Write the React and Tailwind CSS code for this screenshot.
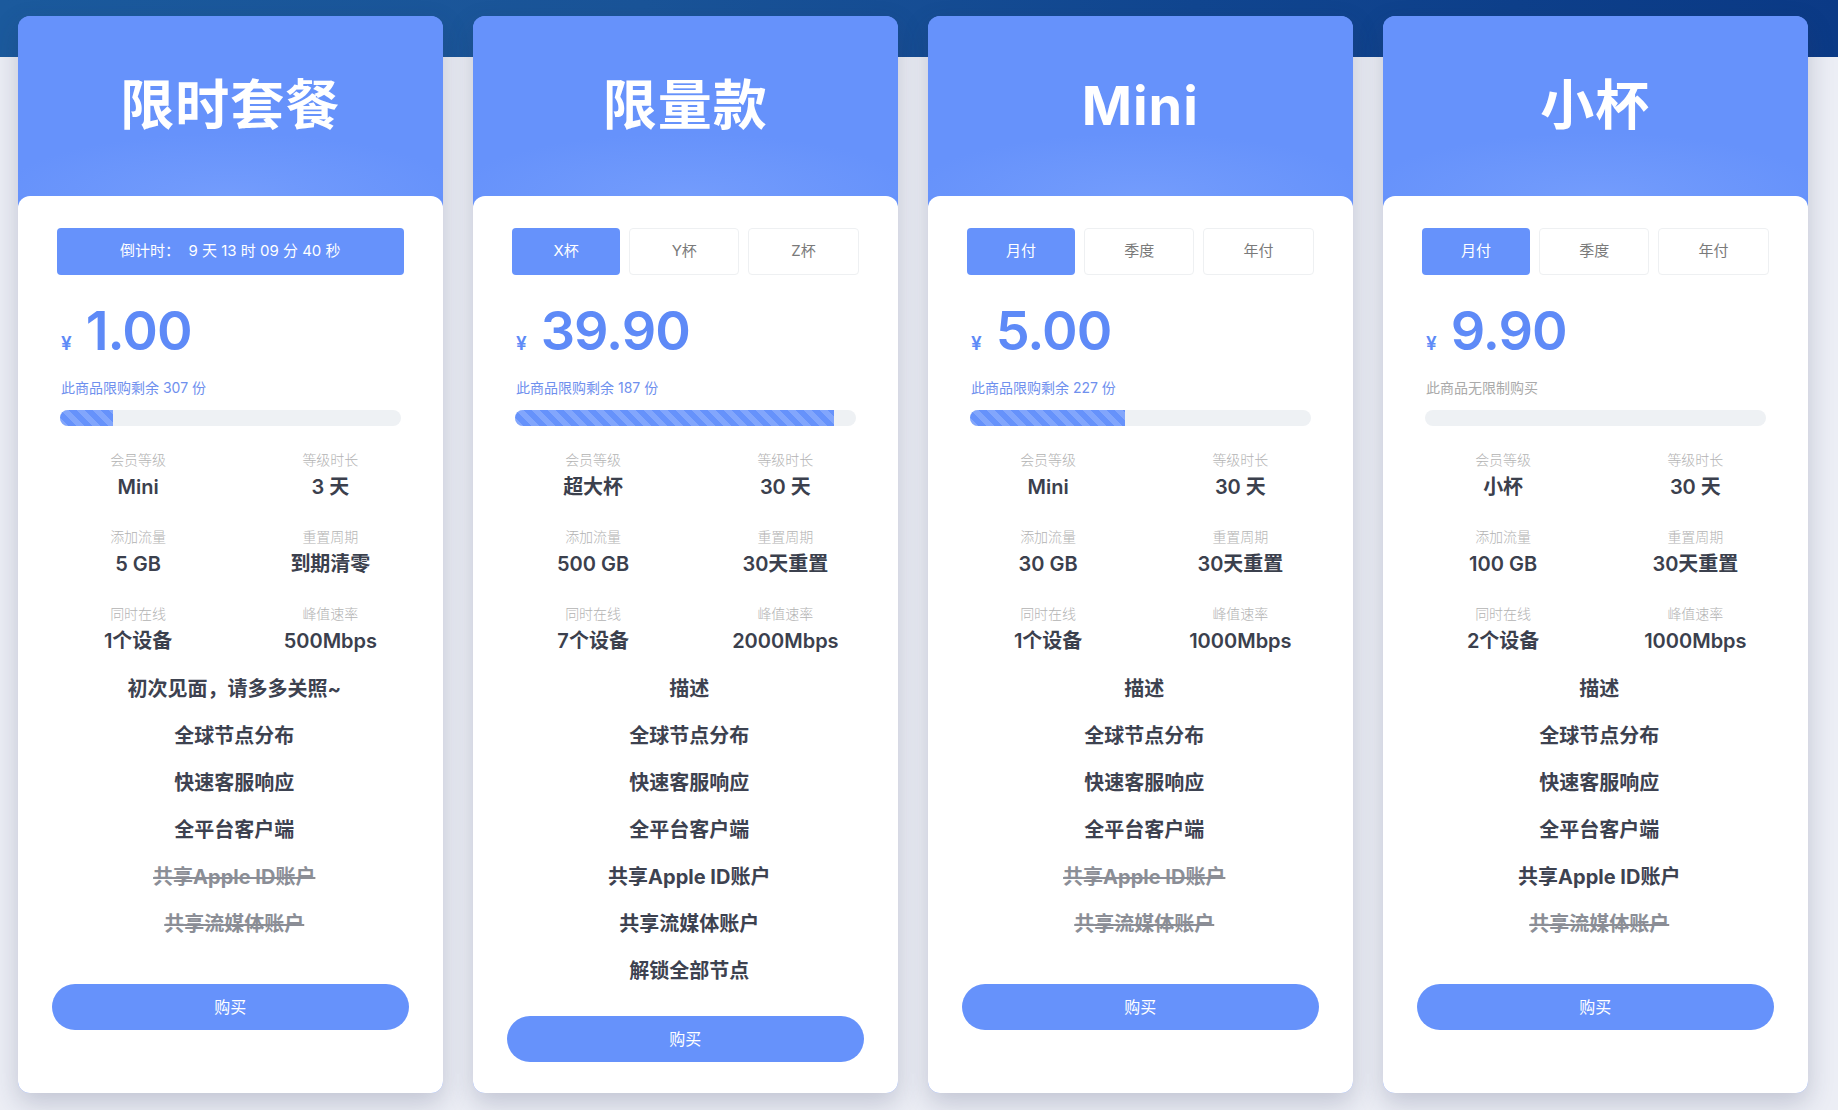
const plans = [
  {
    title: "限时套餐",
    tabs: null,
    countdown: "倒计时：  9 天 13 时 09 分 40 秒",
    price: "1.00",
    stock: "此商品限购剩余 307 份",
    limited: true,
    progress: 15.6,
    stats: [
      ["会员等级", "Mini"],
      ["等级时长", "3 天"],
      ["添加流量", "5 GB"],
      ["重置周期", "到期清零"],
      ["同时在线", "1个设备"],
      ["峰值速率", "500Mbps"],
    ],
    features: [
      ["初次见面，请多多关照~", true],
      ["全球节点分布", true],
      ["快速客服响应", true],
      ["全平台客户端", true],
      ["共享Apple ID账户", false],
      ["共享流媒体账户", false],
    ],
  },
  {
    title: "限量款",
    tabs: ["X杯", "Y杯", "Z杯"],
    price: "39.90",
    stock: "此商品限购剩余 187 份",
    limited: true,
    progress: 93.7,
    stats: [
      ["会员等级", "超大杯"],
      ["等级时长", "30 天"],
      ["添加流量", "500 GB"],
      ["重置周期", "30天重置"],
      ["同时在线", "7个设备"],
      ["峰值速率", "2000Mbps"],
    ],
    features: [
      ["描述", true],
      ["全球节点分布", true],
      ["快速客服响应", true],
      ["全平台客户端", true],
      ["共享Apple ID账户", true],
      ["共享流媒体账户", true],
      ["解锁全部节点", true],
    ],
  },
  {
    title: "Mini",
    tabs: ["月付", "季度", "年付"],
    price: "5.00",
    stock: "此商品限购剩余 227 份",
    limited: true,
    progress: 45.6,
    stats: [
      ["会员等级", "Mini"],
      ["等级时长", "30 天"],
      ["添加流量", "30 GB"],
      ["重置周期", "30天重置"],
      ["同时在线", "1个设备"],
      ["峰值速率", "1000Mbps"],
    ],
    features: [
      ["描述", true],
      ["全球节点分布", true],
      ["快速客服响应", true],
      ["全平台客户端", true],
      ["共享Apple ID账户", false],
      ["共享流媒体账户", false],
    ],
  },
  {
    title: "小杯",
    tabs: ["月付", "季度", "年付"],
    price: "9.90",
    stock: "此商品无限制购买",
    limited: false,
    progress: 0,
    stats: [
      ["会员等级", "小杯"],
      ["等级时长", "30 天"],
      ["添加流量", "100 GB"],
      ["重置周期", "30天重置"],
      ["同时在线", "2个设备"],
      ["峰值速率", "1000Mbps"],
    ],
    features: [
      ["描述", true],
      ["全球节点分布", true],
      ["快速客服响应", true],
      ["全平台客户端", true],
      ["共享Apple ID账户", true],
      ["共享流媒体账户", false],
    ],
  },
];

const PlanCard = ({ plan }) => {
  return (
    <div className="flex h-[1077px] w-[424.5px] shrink-0 flex-col overflow-hidden rounded-xl bg-[#6692fb] shadow-[0_10px_26px_rgba(40,50,90,0.22)]">
      {/* header */}
      <div className="flex h-[180px] shrink-0 items-center justify-center bg-[radial-gradient(ellipse_55%_35%_at_50%_100%,#739cfc_0%,#6692fb_100%)]">
        <h2 className="text-[54px] font-bold leading-none tracking-[1px] text-white">
          {plan.title}
        </h2>
      </div>

      {/* body */}
      <div className="flex flex-1 flex-col rounded-t-xl bg-white px-[39px] pt-8">
        {plan.tabs ? (
          <div className="flex gap-[9px]">
            {plan.tabs.map((t, i) => (
              <button
                key={t}
                className={
                  i === 0
                    ? "h-[47px] flex-1 rounded-[4px] bg-[#6692fb] text-[15px] text-white"
                    : "h-[47px] flex-1 rounded-[4px] border border-[#eef0f2] bg-white text-[15px] text-[#7a7a7a]"
                }
              >
                {t}
              </button>
            ))}
          </div>
        ) : (
          <div className="flex h-[47px] items-center justify-center rounded-[4px] bg-[#6692fb] text-[15px] whitespace-pre text-white">
            {plan.countdown}
          </div>
        )}

        <div className="px-[3px]">
          <div className="mt-[29px] flex items-baseline gap-[14px] pl-[1px] text-[#5e8af7]">
            <span className="text-[19px] font-semibold">¥</span>
            <span className="text-[54px] leading-[54px] font-semibold tracking-[-1px]">
              {plan.price}
            </span>
          </div>
          <p
            className={
              plan.limited
                ? "mt-[19px] pl-[1px] text-[14px] leading-5 text-[#6f90ee]"
                : "mt-[19px] pl-[1px] text-[14px] leading-5 text-[#aaaaaa]"
            }
          >
            {plan.stock}
          </p>
          <div className="mt-[12px] h-4 overflow-hidden rounded-full bg-[#eef1f4]">
            <div
              className="h-full bg-[#6692fb] bg-[linear-gradient(45deg,rgba(255,255,255,.18)_25%,transparent_25%,transparent_50%,rgba(255,255,255,.18)_50%,rgba(255,255,255,.18)_75%,transparent_75%,transparent)] bg-[length:16px_16px]"
              style={{ width: `${plan.progress}%` }}
            />
          </div>
        </div>

        <div className="mt-6 mr-[-23px] ml-[-15px] grid grid-cols-2 gap-y-[26px]">
          {plan.stats.map(([label, value]) => (
            <div key={label} className="flex flex-col items-center">
              <span className="text-[14px] leading-5 font-light text-[#b3b3b3]">
                {label}
              </span>
              <span className="mt-[3px] text-[20px] leading-7 font-semibold text-[#3b404d]">
                {value}
              </span>
            </div>
          ))}
        </div>

        <ul className="mt-[11px] min-h-[297px] pl-2">
          {plan.features.map(([text, on]) => (
            <li
              key={text}
              className={
                on
                  ? "flex h-[47px] items-center justify-center text-[20px] font-bold text-[#3d4250]"
                  : "flex h-[47px] items-center justify-center text-[20px] font-bold text-[#8b8e96] line-through"
              }
            >
              {text}
            </li>
          ))}
        </ul>

        <button className="mx-[-5px] mt-[21px] h-[46px] rounded-full bg-[#6692fb] text-[16px] text-white">
          购买
        </button>
      </div>
    </div>
  );
};

const App = () => {
  return (
    <div className="min-h-screen bg-[#eceef5] bg-[linear-gradient(90deg,#1b5a9d_0%,#1a5498_35%,#114690_65%,#0b3a86_100%)] bg-[length:100%_57px] bg-no-repeat font-['Inter','Noto_Sans_CJK_SC',sans-serif]">
      <div className="flex gap-[30.5px] pt-4 pl-[18px]">
        {plans.map((p) => (
          <PlanCard key={p.title} plan={p} />
        ))}
      </div>
    </div>
  );
};

export default App;
